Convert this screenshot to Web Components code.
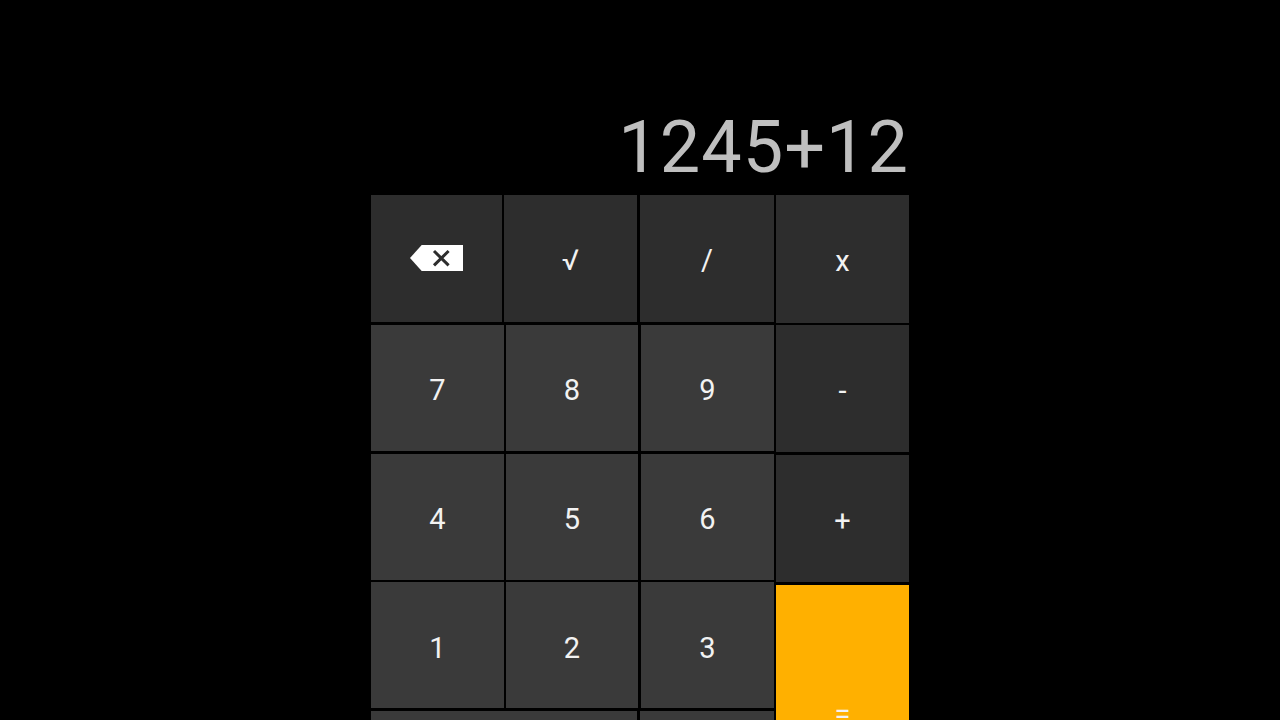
<!DOCTYPE html>
<html lang="en">
<head>
<meta charset="utf-8">
<title>Calculator</title>
<style>
html,body{margin:0;height:100%;background:#000;overflow:hidden;font-family:Roboto,"Liberation Sans",sans-serif}
</style>
</head>
<body>
<calc-app>
  <calc-display slot="display">1245+12</calc-display>
  <calc-keypad slot="keys">
    <calc-row slot="left" style="height:127px;grid-template-columns:131px 133px 134px;column-gap:0">
      <calc-key tone="dark" label="Backspace"><back-icon></back-icon></calc-key>
      <calc-key tone="dark" style="margin-left:2px;width:133px;padding-top:3px">√</calc-key>
      <calc-key tone="dark" style="margin-left:5px;width:134px;padding-top:3px">/</calc-key>
    </calc-row>
    <calc-row slot="left" style="grid-template-columns:133px 134px 136px">
      <calc-key>7</calc-key><calc-key style="margin-left:2px">8</calc-key><calc-key style="margin-left:3px">9</calc-key>
    </calc-row>
    <calc-row slot="left" style="grid-template-columns:133px 134px 136px">
      <calc-key>4</calc-key><calc-key style="margin-left:2px">5</calc-key><calc-key style="margin-left:3px">6</calc-key>
    </calc-row>
    <calc-row slot="left" style="grid-template-columns:133px 134px 136px;margin-top:-1px">
      <calc-key style="padding-top:7px">1</calc-key><calc-key style="margin-left:2px;padding-top:7px">2</calc-key><calc-key style="margin-left:3px;padding-top:7px">3</calc-key>
    </calc-row>
    <calc-row slot="left" style="grid-template-columns:266px 137px">
      <calc-key></calc-key><calc-key style="margin-left:3px"></calc-key>
    </calc-row>
    <calc-key slot="right" tone="dark" style="height:128px">x</calc-key>
    <calc-key slot="right" tone="dark" style="height:127px">-</calc-key>
    <calc-key slot="right" tone="dark" style="height:127px;margin-top:1px">+</calc-key>
    <calc-key slot="right" tone="accent" style="height:252px;margin-top:1px">=</calc-key>
  </calc-keypad>
</calc-app>
<script>
function def(name, css, html){
  customElements.define(name, class extends HTMLElement{
    constructor(){
      super();
      this.attachShadow({mode:'open'}).innerHTML='<style>'+css+'</style>'+html;
    }
  });
}
def('calc-app',
  ':host{display:flex;flex-direction:column;width:538px;margin:0 auto;height:720px;overflow:hidden}',
  '<slot name="display"></slot><slot name="keys"></slot>');
def('calc-display',
  ':host{display:block;flex:none;height:195px;box-sizing:border-box;padding:104px 0 0 0;text-align:right;color:#bfbfbf;font:400 72px/88px Roboto,sans-serif;letter-spacing:1px;white-space:nowrap}',
  '<slot></slot>');
def('calc-keypad',
  ':host{display:flex;flex:none;gap:2px;align-items:flex-start}.l{display:flex;flex-direction:column;gap:3px;width:403px;flex:none}.r{display:flex;flex-direction:column;gap:2px;width:133px;flex:none}',
  '<div class="l"><slot name="left"></slot></div><div class="r"><slot name="right"></slot></div>');
def('calc-row',
  ':host{display:grid;height:126px}',
  '<slot></slot>');
def('calc-key',
  ':host{display:flex;align-items:center;justify-content:center;background:#3a3a3a;color:#f2f2f2;font:400 29px/1 Roboto,sans-serif;padding-top:5px;box-sizing:border-box}'+
  ':host([tone=dark]){background:#2d2d2d}:host([tone=accent]){background:#ffb000;line-height:12px}',
  '<slot></slot>');
def('back-icon',
  ':host{display:block;width:54px;height:28px;margin-bottom:6px}svg{display:block}',
  '<svg width="54" height="28" viewBox="0 0 54 28" aria-hidden="true"><path d="M11.7 1H53V27H11.7L0 14Z" fill="#fff"/><path d="M24 7L38.6 21.4M38.6 7L24 21.4" stroke="#2d2d2d" stroke-width="3" fill="none"/></svg>');
</script>
</body>
</html>
